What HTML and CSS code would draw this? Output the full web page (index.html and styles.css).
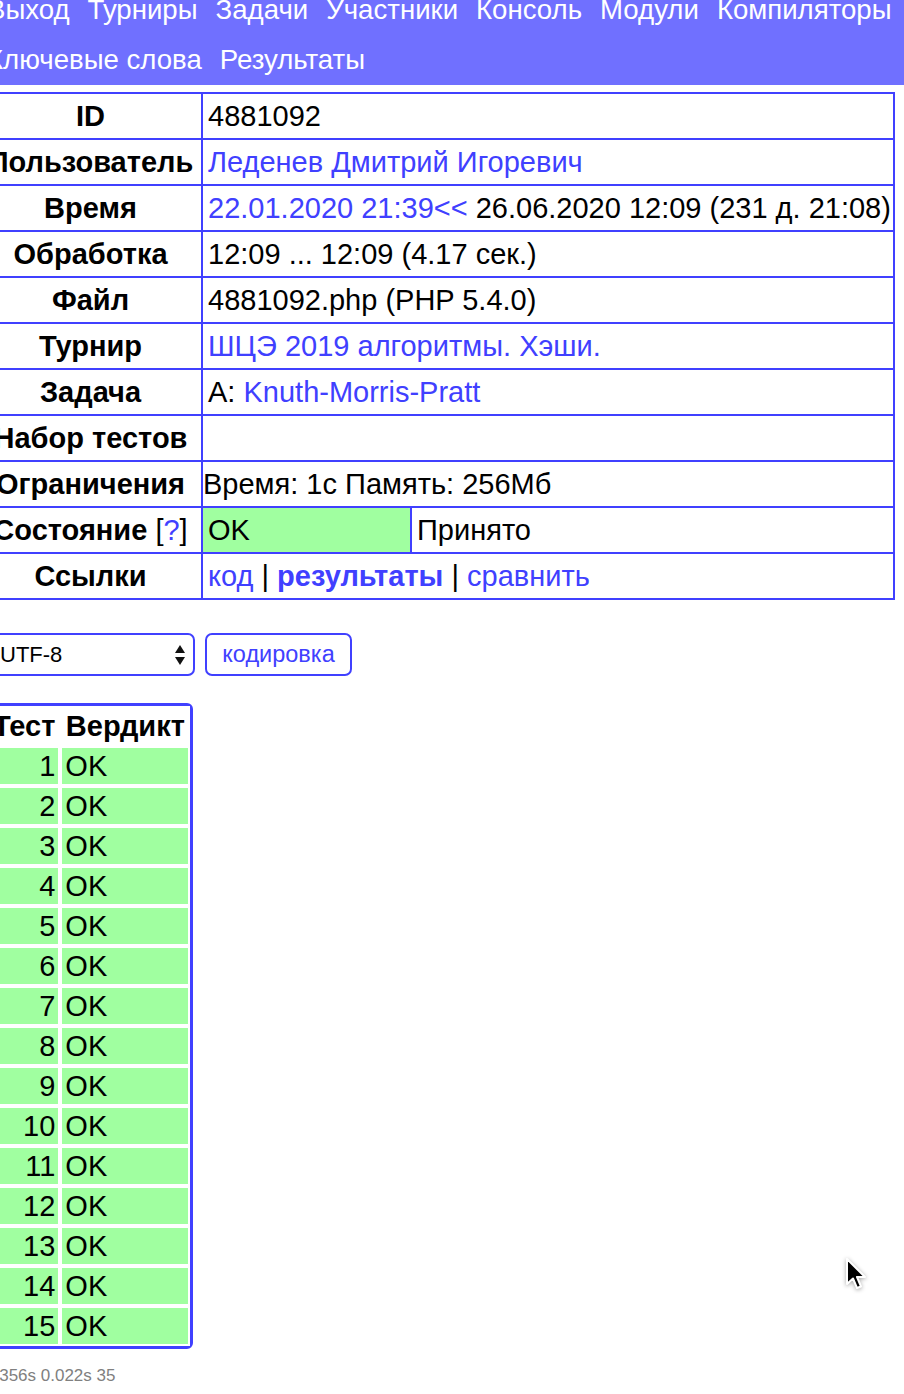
FILE: index.html
```html
<!DOCTYPE html>
<html lang="ru">
<head>
<meta charset="utf-8">
<title>Результат</title>
<link rel="stylesheet" href="styles.css">
</head>
<body>
<nav class="menu">
  <div class="menu-links">
    <a href="#">Выход</a>
    <a href="#">Турниры</a>
    <a href="#">Задачи</a>
    <a href="#">Участники</a>
    <a href="#">Консоль</a>
    <a href="#">Модули</a>
    <a href="#">Компиляторы</a>
    <a href="#">Ключевые слова</a>
    <a href="#">Результаты</a>
  </div>
</nav>
<main class="content">
  <table class="run">
    <colgroup><col class="c-label"><col class="c-status"><col></colgroup>
    <tr><th>ID</th><td colspan="2">4881092</td></tr>
    <tr><th>Пользователь</th><td colspan="2"><a href="#">Леденев Дмитрий Игоревич</a></td></tr>
    <tr><th>Время</th><td colspan="2"><a href="#">22.01.2020 21:39&lt;&lt;</a> 26.06.2020 12:09 (231 д. 21:08)</td></tr>
    <tr><th>Обработка</th><td colspan="2">12:09 ... 12:09 (4.17 сек.)</td></tr>
    <tr><th>Файл</th><td colspan="2">4881092.php (PHP 5.4.0)</td></tr>
    <tr><th>Турнир</th><td colspan="2"><a href="#">ШЦЭ 2019 алгоритмы. Хэши.</a></td></tr>
    <tr><th>Задача</th><td colspan="2">A: <a href="#">Knuth-Morris-Pratt</a></td></tr>
    <tr><th>Набор тестов</th><td colspan="2"></td></tr>
    <tr><th>Ограничения</th><td colspan="2" class="flush">Время: 1с Память: 256Мб</td></tr>
    <tr><th>Состояние <span class="plain">[<a href="#">?</a>]</span></th><td class="ok">OK</td><td>Принято</td></tr>
    <tr><th>Ссылки</th><td colspan="2"><a href="#">код</a> | <a href="#" class="strong">результаты</a> | <a href="#">сравнить</a></td></tr>
  </table>

  <form class="encoding">
    <div class="select-wrap">
      <select class="enc-select"><option>UTF-8</option></select>
      <svg class="arrows" width="12" height="22" viewBox="0 0 12 22"><path d="M6 1 L11 9 L1 9 Z" fill="#111"/><path d="M1 13 L11 13 L6 21 Z" fill="#111"/></svg>
    </div>
    <button type="button" class="enc-btn">кодировка</button>
  </form>

  <table class="tests">
    <tr><th>Тест</th><th class="verdict">Вердикт</th></tr>
    <tr><td class="num">1</td><td>OK</td></tr>
    <tr><td class="num">2</td><td>OK</td></tr>
    <tr><td class="num">3</td><td>OK</td></tr>
    <tr><td class="num">4</td><td>OK</td></tr>
    <tr><td class="num">5</td><td>OK</td></tr>
    <tr><td class="num">6</td><td>OK</td></tr>
    <tr><td class="num">7</td><td>OK</td></tr>
    <tr><td class="num">8</td><td>OK</td></tr>
    <tr><td class="num">9</td><td>OK</td></tr>
    <tr><td class="num">10</td><td>OK</td></tr>
    <tr><td class="num">11</td><td>OK</td></tr>
    <tr><td class="num">12</td><td>OK</td></tr>
    <tr><td class="num">13</td><td>OK</td></tr>
    <tr><td class="num">14</td><td>OK</td></tr>
    <tr><td class="num">15</td><td>OK</td></tr>
  </table>

  <p class="timing">0.356s 0.022s 35</p>
</main>
<svg class="cursor" width="26" height="36" viewBox="0 0 26 36"><path d="M3 2 L3 27 L9 21.5 L13 31 L17 29.5 L13 20 L21 20 Z" fill="#000" stroke="#fff" stroke-width="2" stroke-linejoin="round"/></svg>
</body>
</html>
```
FILE: styles.css
```css
html, body {
  margin: 0;
  padding: 0;
  background: #fff;
}
body {
  font-family: "Liberation Sans", Arial, sans-serif;
  font-size: 29px;
  color: #000;
  overflow: hidden;
  position: relative;
  min-height: 1394px;
}
a {
  color: #4040ff;
  text-decoration: none;
}

.menu {
  background: #7070ff;
  margin-top: -15px;
  height: 100px;
}
.menu-links {
  display: flex;
  flex-wrap: wrap;
  column-gap: 18px;
  margin-left: -13px;
  width: 915px;
  line-height: 50px;
  font-size: 27.6px;
}
.menu-links a {
  color: #fff;
  white-space: nowrap;
}

.content {
  padding-top: 7px;
}

.run {
  border-collapse: collapse;
  table-layout: fixed;
  margin-left: -22px;
  width: 917px;
}
.run .c-label {
  width: 223px;
}
.run .c-status {
  width: 209px;
}
.run th, .run td {
  border: 2px solid #4040ff;
  padding: 5px 5px;
  line-height: 34px;
  height: 34px;
  white-space: nowrap;
  overflow: visible;
}
.run th {
  text-align: center;
  font-weight: bold;
}
.run td {
  text-align: left;
}
.run td.flush {
  padding-left: 0;
}
.run td.ok {
  background: #a0ffa0;
}
.run .plain {
  font-weight: normal;
}
.run .strong {
  font-weight: bold;
}

.encoding {
  display: flex;
  gap: 10px;
  margin: 33px 0 0 -12px;
}
.select-wrap {
  position: relative;
}
.enc-select {
  appearance: none;
  -webkit-appearance: none;
  width: 207px;
  height: 43px;
  border: 2px solid #4040ff;
  border-radius: 7px;
  background: #fff;
  font-family: "Liberation Sans", Arial, sans-serif;
  font-size: 22px;
  color: #000;
  padding: 0 10px;
  margin: 0;
}
.arrows {
  position: absolute;
  right: 9px;
  top: 11px;
  pointer-events: none;
}
.enc-btn {
  height: 43px;
  width: 147px;
  border: 2px solid #4040ff;
  border-radius: 7px;
  background: #fff;
  color: #4040ff;
  font-family: "Liberation Sans", Arial, sans-serif;
  font-size: 23.5px;
  padding: 0;
  margin: 0;
}

.tests {
  margin: 27px 0 0 -15px;
  border: 3px solid #4040ff;
  border-radius: 6px;
  border-collapse: separate;
  border-spacing: 0;
}
.tests th, .tests td {
  border: 2px solid #fff;
  padding: 0 3px;
  height: 36px;
  line-height: 36px;
  white-space: nowrap;
}
.tests th {
  font-weight: bold;
  text-align: center;
}
.tests th.verdict {
  min-width: 120px;
}
.tests td {
  background: #a0ffa0;
  text-align: left;
}
.tests td.num {
  text-align: right;
}

.timing {
  margin: 16px 0 0 -15px;
  font-size: 17px;
  line-height: 22px;
  color: #808080;
}

.cursor {
  position: absolute;
  left: 844px;
  top: 1257px;
  filter: drop-shadow(0 1px 2px rgba(0,0,0,0.35));
}
```
